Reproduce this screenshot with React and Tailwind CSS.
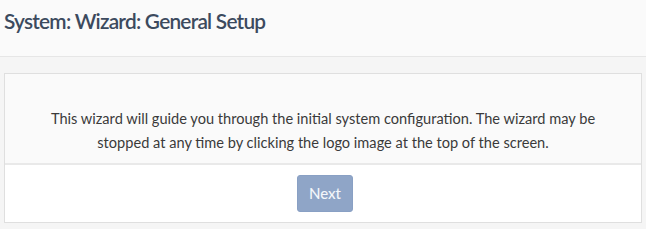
import React from 'react';

const WizardIntro = () => {
  return (
    <div className="min-h-[229px] bg-[#f5f5f5]" style={{ fontFamily: 'Lato, "Open Sans", sans-serif' }}>
      <div className="h-[57px] bg-[#fafafa] border-b border-[#e6e6e6] px-[4px] pt-[6px]">
        <h1 className="text-[20.8px] leading-[30px] font-semibold tracking-[-0.75px] text-[#3c4a5e]">
          System: Wizard: General Setup
        </h1>
      </div>

      <div className="px-[4px] pt-[16px] pb-[4px]">
        <div className="border border-[#dfdfdf] bg-white">
          <div className="h-[89px] bg-[#fafafa] px-[36px] pt-[33px] text-center text-[14.6px] leading-[24px] text-[#3a3a3a]">
            This wizard will guide you through the initial system configuration. The wizard may be stopped at any time by clicking the logo image at the top of the screen.
          </div>
          <div className="border-t-2 border-[#e9e9e9] h-[59px] flex items-center justify-center">
            <button className="ml-[4px] w-[56px] h-[37px] rounded-[3px] bg-[#8fa5c7] border border-[#89a0c4] text-[15px] font-medium text-[#f3f6fa]">
              Next
            </button>
          </div>
        </div>
      </div>
    </div>
  );
};

export default WizardIntro;
